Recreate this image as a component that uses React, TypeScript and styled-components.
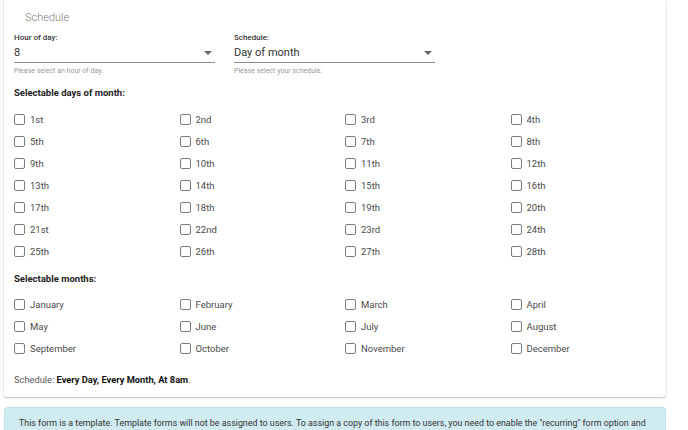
import React from "react";
import styled, { createGlobalStyle } from "styled-components";

const Global = createGlobalStyle`
  html, body { margin: 0; padding: 0; background: #fff; }
  body { font-family: Roboto, "Liberation Sans", sans-serif; color: #212529; }
`;

const Page = styled.div`
  width: 688px;
  height: 430px;
  overflow: hidden;
  padding: 0 22px 0 4px;
  box-sizing: border-box;
`;

const Card = styled.div`
  background: #fff;
  border-radius: 0 0 3px 3px;
  box-shadow: 0 1px 2px rgba(0,0,0,0.25), 0 0 1px rgba(0,0,0,0.12);
  padding: 10px 10px 11px 10px;
  margin-top: -1px;
`;

const Title = styled.div`
  font-size: 11px;
  font-weight: 300;
  color: #7a7a7a;
  padding: 2px 0 0 11px;
  height: 24px;
  line-height: 14px;
  box-sizing: border-box;
`;

const SelectRow = styled.div`
  display: flex;
  gap: 19px;
`;

const Field = styled.div`
  width: 201px;
  display: flex;
  flex-direction: column;
`;

const FieldLabel = styled.div`
  font-size: 8px;
  font-weight: 500;
  color: #333;
  line-height: 10px;
`;

const SelectBox = styled.div`
  display: flex;
  align-items: center;
  justify-content: space-between;
  height: 19px;
  border-bottom: 1px solid #8c8c8c;
  font-size: 11px;
  color: #333;
  padding-right: 3px;
`;

const Caret = styled.span`
  width: 0;
  height: 0;
  border-left: 4px solid transparent;
  border-right: 4px solid transparent;
  border-top: 4px solid #666;
`;

const Helper = styled.div`
  font-size: 7px;
  color: #9a9a9a;
  margin-top: 4px;
  line-height: 9px;
`;

const SectionHead = styled.div<{ $top: number; $bottom: number }>`
  font-size: 9.5px;
  font-weight: 700;
  color: #222;
  margin: ${(p) => p.$top}px 0 ${(p) => p.$bottom}px;
  line-height: 12px;
`;

const Grid = styled.div`
  display: grid;
  grid-template-columns: repeat(4, 165.5px);
  grid-auto-rows: 22px;
`;

const Option = styled.label`
  display: flex;
  align-items: center;
  gap: 5px;
  font-size: 9.5px;
  color: #4a4a4a;
`;

const Box = styled.span`
  width: 9px;
  height: 9px;
  border: 1px solid #7d7d7d;
  border-radius: 2px;
  box-sizing: content-box;
  flex: none;
`;

const Summary = styled.div`
  font-size: 9.3px;
  color: #555;
  margin-top: 15px;
  line-height: 12px;
  b { color: #111; font-weight: 700; }
`;

const Info = styled.div`
  margin-top: 10px;
  background: #d1ecf1;
  border: 1px solid #bee5eb;
  border-radius: 3px;
  padding: 9px 14px;
  font-size: 8.9px;
  color: #333;
  line-height: 12px;
  white-space: nowrap;
`;

const days = [
  "1st","2nd","3rd","4th","5th","6th","7th","8th","9th","10th","11th","12th",
  "13th","14th","15th","16th","17th","18th","19th","20th","21st","22nd","23rd","24th",
  "25th","26th","27th","28th",
];
const months = [
  "January","February","March","April","May","June","July","August",
  "September","October","November","December",
];

export default function App() {
  return (
    <Page>
      <Global />
      <Card>
        <Title>Schedule</Title>
        <SelectRow>
          <Field>
            <FieldLabel>Hour of day:</FieldLabel>
            <SelectBox>8<Caret /></SelectBox>
            <Helper>Please select an hour of day.</Helper>
          </Field>
          <Field>
            <FieldLabel>Schedule:</FieldLabel>
            <SelectBox>Day of month<Caret /></SelectBox>
            <Helper>Please select your schedule.</Helper>
          </Field>
        </SelectRow>
        <SectionHead $top={11} $bottom={9}>Selectable days of month:</SectionHead>
        <Grid>
          {days.map((d) => (
            <Option key={d}><Box />{d}</Option>
          ))}
        </Grid>
        <SectionHead $top={11} $bottom={8}>Selectable months:</SectionHead>
        <Grid>
          {months.map((m) => (
            <Option key={m}><Box />{m}</Option>
          ))}
        </Grid>
        <Summary>Schedule: <b>Every Day, Every Month, At 8am</b>.</Summary>
      </Card>
      <Info>
        This form is a template. Template forms will not be assigned to users. To assign a copy of this form to users, you need to enable the "recurring" form option and
      </Info>
    </Page>
  );
}
